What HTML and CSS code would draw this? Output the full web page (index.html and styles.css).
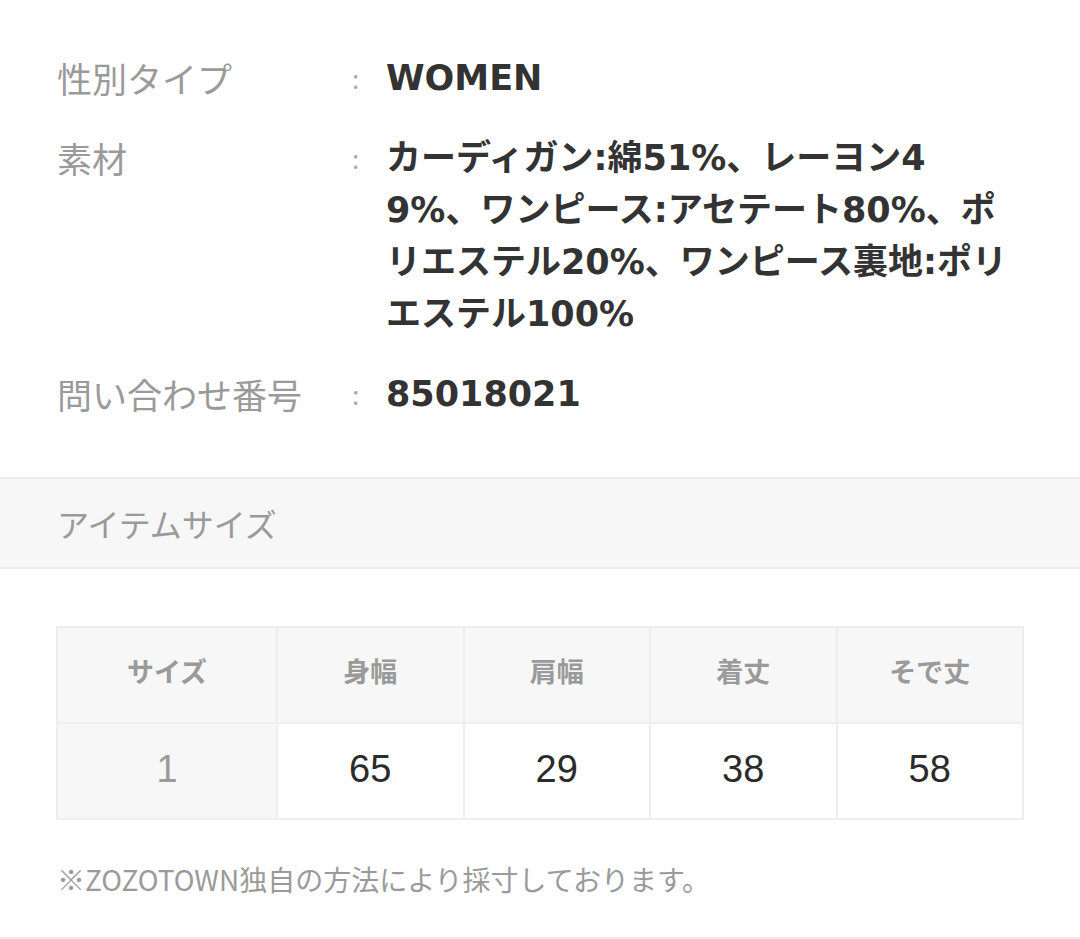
FILE: index.html
```html
<!DOCTYPE html>
<html lang="ja">
<head>
<meta charset="utf-8">
<link rel="stylesheet" href="styles.css">
</head>
<body>
<div class="page">
  <dl class="specs">
    <div class="spec-row">
      <dt class="spec-label">性別タイプ</dt>
      <dd class="spec-colon">:</dd>
      <dd class="spec-value">WOMEN</dd>
    </div>
    <div class="spec-row">
      <dt class="spec-label">素材</dt>
      <dd class="spec-colon">:</dd>
      <dd class="spec-value">カーディガン:綿51%、レーヨン49%、ワンピース:アセテート80%、ポリエステル20%、ワンピース裏地:ポリエステル100%</dd>
    </div>
    <div class="spec-row">
      <dt class="spec-label">問い合わせ番号</dt>
      <dd class="spec-colon">:</dd>
      <dd class="spec-value">85018021</dd>
    </div>
  </dl>

  <div class="section-head">アイテムサイズ</div>

  <div class="size-wrap">
    <table class="size-table">
      <thead>
        <tr>
          <th class="col-first">サイズ</th>
          <th>身幅</th>
          <th>肩幅</th>
          <th>着丈</th>
          <th>そで丈</th>
        </tr>
      </thead>
      <tbody>
        <tr>
          <td class="col-first">1</td>
          <td>65</td>
          <td>29</td>
          <td>38</td>
          <td>58</td>
        </tr>
      </tbody>
    </table>
    <p class="note">※ZOZOTOWN独自の方法により採寸しております。</p>
  </div>
</div>
</body>
</html>
```

FILE: styles.css
```css
html, body {
  margin: 0;
  padding: 0;
  background: #ffffff;
}

body {
  font-family: "Noto Sans CJK JP", "Noto Sans", sans-serif;
  color: #333333;
}

.page {
  width: 1080px;
  height: 939px;
  overflow: hidden;
  border-bottom: 2px solid #ececec;
  box-sizing: border-box;
}

.specs {
  margin: 0;
  padding: 52px 0 0 57px;
  display: flex;
  flex-direction: column;
  gap: 28px;
}

.spec-row {
  display: grid;
  grid-template-columns: 290px 39px 628px;
  align-items: start;
}

.spec-label,
.spec-colon,
.spec-value {
  margin: 0;
  line-height: 52px;
}

.spec-label {
  font-size: 35px;
  color: #9a9a9a;
  font-weight: 400;
}

.spec-colon {
  font-size: 26px;
  color: #aaaaaa;
  padding-left: 5px;
}

.spec-value {
  font-family: "DejaVu Sans", "Noto Sans CJK JP", sans-serif;
  font-size: 35px;
  font-weight: 700;
  color: #333333;
  word-break: break-all;
}

.section-head {
  margin-top: 57px;
  height: 88px;
  border-top: 2px solid #ececec;
  border-bottom: 2px solid #ececec;
  background: #f7f7f7;
  padding-left: 57px;
  display: flex;
  align-items: center;
  font-size: 32px;
  color: #9a9a9a;
}

.size-wrap {
  padding: 57px 56px 0 56px;
}

.size-table {
  width: 968px;
  border-collapse: collapse;
  table-layout: fixed;
}

.size-table th,
.size-table td {
  border: 2px solid #eeeeee;
  text-align: center;
  padding: 0;
}

.size-table th {
  height: 84px;
  background: #f7f7f7;
  color: #9a9a9a;
  font-size: 27px;
  font-weight: 700;
  padding-bottom: 10px;
}

.size-table th.col-first {
  width: 218px;
}

.size-table td {
  height: 90px;
  font-family: "Liberation Sans", "Noto Sans CJK JP", sans-serif;
  font-size: 38px;
  color: #2b2b2b;
  background: #ffffff;
  padding-bottom: 4px;
}

.size-table td.col-first {
  background: #f7f7f7;
  color: #9a9a9a;
}

.note {
  margin: 40px 0 0 1px;
  font-size: 28px;
  line-height: 38px;
  color: #9a9a9a;
}
```
